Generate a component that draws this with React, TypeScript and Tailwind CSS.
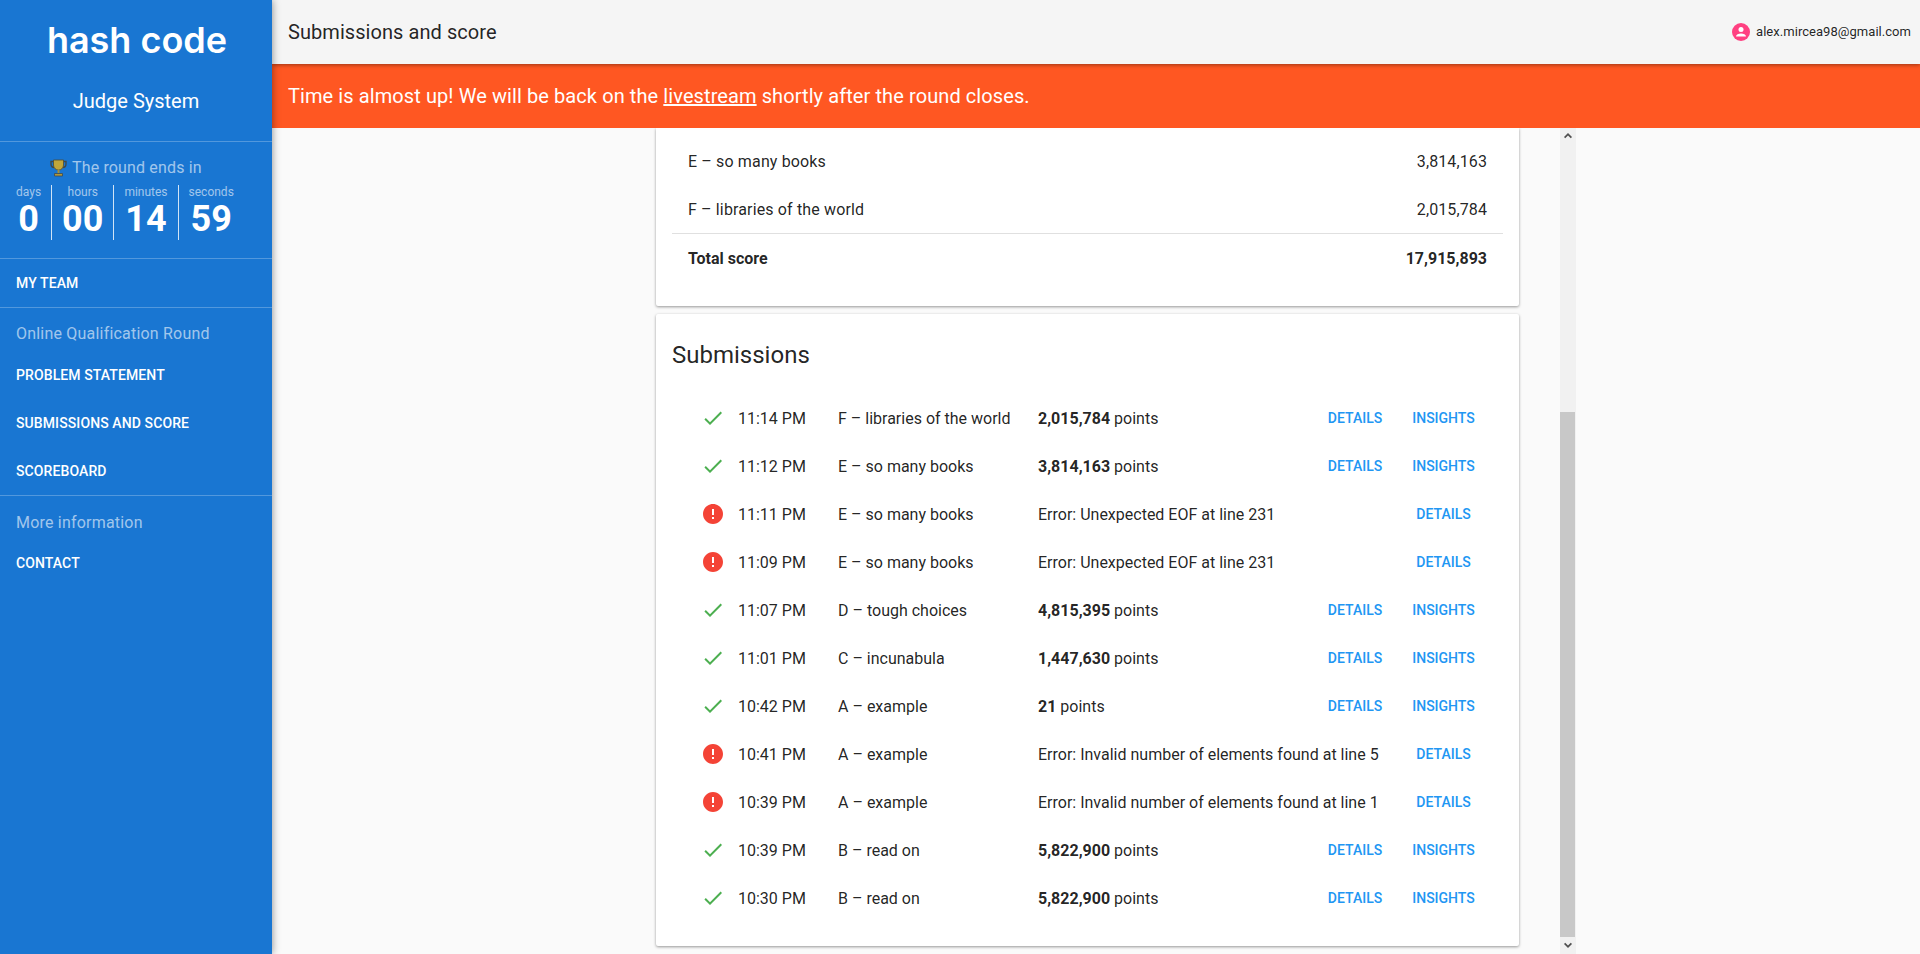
const CHECK = "M9 16.17L4.83 12l-1.42 1.41L9 19 21 7l-1.41-1.41z";
const ERROR =
  "M12 2C6.48 2 2 6.48 2 12s4.48 10 10 10 10-4.48 10-10S17.52 2 12 2zm1 15h-2v-2h2v2zm0-4h-2V7h2v6z";

type Submission = {
  time: string;
  problem: string;
  points?: string;
  error?: string;
};

const submissions: Submission[] = [
  { time: "11:14 PM", problem: "F – libraries of the world", points: "2,015,784" },
  { time: "11:12 PM", problem: "E – so many books", points: "3,814,163" },
  { time: "11:11 PM", problem: "E – so many books", error: "Error: Unexpected EOF at line 231" },
  { time: "11:09 PM", problem: "E – so many books", error: "Error: Unexpected EOF at line 231" },
  { time: "11:07 PM", problem: "D – tough choices", points: "4,815,395" },
  { time: "11:01 PM", problem: "C – incunabula", points: "1,447,630" },
  { time: "10:42 PM", problem: "A – example", points: "21" },
  { time: "10:41 PM", problem: "A – example", error: "Error: Invalid number of elements found at line 5" },
  { time: "10:39 PM", problem: "A – example", error: "Error: Invalid number of elements found at line 1" },
  { time: "10:39 PM", problem: "B – read on", points: "5,822,900" },
  { time: "10:30 PM", problem: "B – read on", points: "5,822,900" },
];

const timer = [
  { label: "days", value: "0" },
  { label: "hours", value: "00" },
  { label: "minutes", value: "14" },
  { label: "seconds", value: "59" },
];

function NavLink({ label }: { label: string }) {
  return (
    <div className="h-12 flex items-center px-4 text-[14px] tracking-[0.1px] font-medium text-white uppercase">{label}</div>
  );
}

function Trophy() {
  return (
    <svg width="17" height="18" viewBox="0 0 17 18" aria-hidden="true">
      <path d="M3.5 2.5H1v2.500c0 2 1.500 3.500 3.500 3.500M13.500 2.500H16v2.500c0 2-1.500 3.500-3.500 3.500" fill="none" stroke="#3f4a4f" strokeWidth="1.4" />
      <path d="M3.500 1h10v5c0 3-2.200 5-5 5s-5-2-5-5z" fill="#c2a63a" stroke="#4d4a32" strokeWidth="0.8" />
      <rect x="7.500" y="10.500" width="2" height="3.500" fill="#a8903a" />
      <path d="M4.500 14.500h8V17h-8z" fill="#b0983a" stroke="#3f4a4f" strokeWidth="0.8" />
    </svg>
  );
}

function Sidebar() {
  return (
    <aside className="w-[272px] shrink-0 h-full bg-[#1976d2] shadow-[0_0_8px_rgba(0,0,0,0.45)] z-20 flex flex-col">
      <div className="h-[141px] flex flex-col items-center text-white">
        <div className="mt-[16px] h-[48px] pl-[2px] flex items-center text-[36px] font-semibold font-['Inter',sans-serif] leading-none">
          hash code
        </div>
        <div className="mt-[24px] text-[20px] leading-[26px]">Judge System</div>
      </div>
      <div className="border-t border-white/25 h-[117px]">
        <div className="mt-[15px] flex items-center gap-[5px] pl-[50px] text-[16px] tracking-[0.15px] leading-[22px] text-white/60">
          <Trophy />
          The round ends in
        </div>
        <div className="flex pl-[6px] mt-[6px]">
          {timer.map((t, i) => (
            <div
              key={t.label}
              className={`px-[10px] h-[55px] flex flex-col items-center ${i < 3 ? "border-r border-white/80" : ""}`}
            >
              <span className="text-[12px] leading-[14px] text-white/60">{t.label}</span>
              <span className="text-[36px] leading-[41px] font-bold text-white">{t.value}</span>
            </div>
          ))}
        </div>
      </div>
      <div className="border-t border-white/25 h-[49px]">
        <NavLink label="My team" />
      </div>
      <div className="border-t border-white/25 h-[188px]">
        <div className="h-[43px] px-4 pt-[15px] text-[16px] tracking-[0.2px] leading-[22px] text-white/60">Online Qualification Round</div>
        <NavLink label="Problem statement" />
        <NavLink label="Submissions and score" />
        <NavLink label="Scoreboard" />
      </div>
      <div className="border-t border-white/25">
        <div className="h-[43px] px-4 pt-[16px] text-[16px] tracking-[0.2px] leading-[22px] text-white/60">More information</div>
        <NavLink label="Contact" />
      </div>
    </aside>
  );
}

function ScoreRow({ name, value }: { name: string; value: string }) {
  return (
    <div className="h-12 pt-[2px] flex items-center justify-between px-4 text-[16px] text-black/87">
      <span className="tracking-[0.14px]">{name}</span>
      <span className="tracking-[0.1px]">{value}</span>
    </div>
  );
}

function SubmissionRow({ s }: { s: Submission }) {
  return (
    <div className="h-12 flex items-center pl-[29px] text-[16px] text-black/87">
      <div className="w-[37px] h-6 mb-[2px] shrink-0">
        {s.error ? (
          <svg width="24" height="24" viewBox="0 0 24 24" fill="#f44336" aria-hidden="true">
            <path d={ERROR} />
          </svg>
        ) : (
          <svg width="24" height="24" viewBox="0 0 24 24" fill="#4caf50" aria-hidden="true">
            <path d={CHECK} />
          </svg>
        )}
      </div>
      <div className="w-[100px] shrink-0">{s.time}</div>
      <div className="w-[200px] shrink-0">{s.problem}</div>
      <div className="flex-1 min-w-0 whitespace-nowrap">
        {s.error ? (
          s.error
        ) : (
          <>
            <span className="font-bold">{s.points}</span> points
          </>
        )}
      </div>
      <div className="flex w-[177px] shrink-0 mr-[13px] mb-[2px] text-[14px] font-medium uppercase text-[#2196f3] text-center">
        {s.error ? (
          <>
            <div className="w-[84px]" />
            <div className="w-[93px]">Details</div>
          </>
        ) : (
          <>
            <div className="w-[84px]">Details</div>
            <div className="w-[93px]">Insights</div>
          </>
        )}
      </div>
    </div>
  );
}

function Scrollbar() {
  return (
    <div className="w-[16px] h-full bg-[#f1f1f1] flex flex-col items-center">
      <svg width="16" height="17" viewBox="0 0 16 17" className="shrink-0" aria-hidden="true">
        <path d="M4 9l4-4 4 4-1.200 1.200L8 7.400l-2.800 2.800z" fill="#505050" />
      </svg>
      <div className="h-[267px] shrink-0" />
      <div className="flex-1 w-[15px] self-start bg-[#c8c8c8]" />
      <svg width="16" height="17" viewBox="0 0 16 17" className="shrink-0" aria-hidden="true">
        <path d="M4 7l4 4 4-4-1.200-1.200L8 8.600 5.200 5.800z" fill="#505050" />
      </svg>
    </div>
  );
}

export default function App() {
  return (
    <div className="h-[954px] w-[1920px] flex overflow-hidden bg-[#fafafa] font-['Roboto',sans-serif]">
      <Sidebar />
      <div className="flex-1 flex flex-col min-w-0">
        <header className="h-16 shrink-0 bg-[#f5f5f5] flex items-center justify-between pl-4 pr-[9px] shadow-[0_1px_4px_rgba(0,0,0,0.4)] z-10">
          <span className="text-[20px] tracking-[0.06px] text-black/87">Submissions and score</span>
          <div className="flex items-center gap-[6px] text-[13px] tracking-[0.04px] text-black/87">
            <svg width="18" height="18" viewBox="0 0 18 18" aria-hidden="true">
              <circle cx="9" cy="9" r="9" fill="#ff4081" />
              <circle cx="9" cy="6.500" r="2.500" fill="#fff" />
              <path d="M4 13.500c0-2 2.500-3 5-3s5 1 5 3z" fill="#fff" />
            </svg>
            alex.mircea98@gmail.com
          </div>
        </header>
        <div className="h-16 shrink-0 bg-[#ff5722] flex items-center px-4 text-[20px] tracking-[0.09px] text-white">
          <span>
            Time is almost up! We will be back on the <span className="underline">livestream</span> shortly after the round closes.
          </span>
        </div>
        <div className="flex-1 min-h-0 flex overflow-hidden">
          <div className="ml-[384px] w-[863px] flex flex-col gap-2 shrink-0">
            <section className="bg-white rounded-b-[2px] shadow-[0_1px_3px_rgba(0,0,0,0.4)] px-4 pt-[9px] h-[178px]">
              <ScoreRow name="E – so many books" value="3,814,163" />
              <ScoreRow name="F – libraries of the world" value="2,015,784" />
              <div className="border-t border-[#e0e0e0]" />
              <div className="h-12 pt-[2px] flex items-center justify-between px-4 text-[16px] font-bold text-black/87">
                <span>Total score</span>
                <span>17,915,893</span>
              </div>
            </section>
            <section className="bg-white rounded-[2px] shadow-[0_1px_3px_rgba(0,0,0,0.4)] px-4 h-[632px]">
              <h2 className="text-[24px] leading-[32px] pt-[25px] h-[56px] text-black/87">Submissions</h2>
              <div className="pt-[25px]">
                {submissions.map((s, i) => (
                  <SubmissionRow key={i} s={s} />
                ))}
              </div>
            </section>
          </div>
          <div className="ml-[41px]">
            <Scrollbar />
          </div>
        </div>
      </div>
    </div>
  );
}
